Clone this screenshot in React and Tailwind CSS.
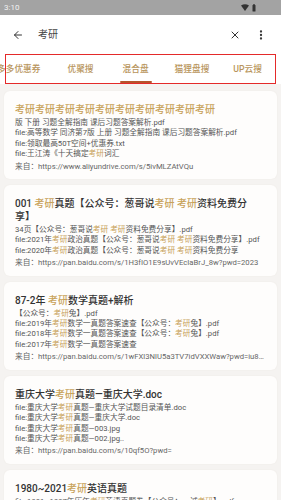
import { ArrowLeft, X, MoreVertical } from "lucide-react";

const FONT = { fontFamily: "Roboto, 'Noto Sans CJK SC', sans-serif" };

// 把“考研”高亮成金色
function Hl({ text }) {
  const parts = text.split("考研");
  return (
    <>
      {parts.map((p, i) => (
        <span key={i}>
          {p}
          {i < parts.length - 1 && <span className="text-[#c8a25a]">考研</span>}
        </span>
      ))}
    </>
  );
}

const results = [
  {
    title: ["考研考研考研考研考研考研考研考研考研考研"],
    files: [
      "版 下册 习题全解指南 课后习题答案解析.pdf",
      "file:高等数学 同济第7版 上册 习题全解指南 课后习题答案解析.pdf",
      "file:领取最高50T空间+优惠券.txt",
      "file:王江涛《十天搞定考研词汇",
    ],
    from: "https://www.aliyundrive.com/s/5ivMLZAtVQu",
  },
  {
    title: ["001 考研真题【公众号：葱哥说考研 考研资料免费分", "享】"],
    files: [
      "34页【公众号：葱哥说考研 考研资料免费分享】.pdf",
      "file:2021年考研政治真题【公众号：葱哥说考研 考研资料免费分享】.pdf",
      "file:2020年考研政治真题【公众号：葱哥说考研 考研资料免费分享",
    ],
    from: "https://pan.baidu.com/s/1H3fIO1E9sUvVEcIaBrJ_8w?pwd=2023",
  },
  {
    title: ["87-2年 考研数学真题+解析"],
    files: [
      "【公众号：考研兔】.pdf",
      "file:2019年考研数学一真题答案速查【公众号：考研兔】.pdf",
      "file:2018年考研数学一真题答案速查【公众号：考研兔】.pdf",
      "file:2017年考研数学一真题答案速查",
    ],
    from: "https://pan.baidu.com/s/1wFXl3NlU5a3TV7idVXXWaw?pwd=iu8kx2",
  },
  {
    title: ["重庆大学考研真题—重庆大学.doc"],
    files: [
      "file:重庆大学考研真题—重庆大学试题目录清单.doc",
      "file:重庆大学考研真题—重庆大学.doc",
      "file:重庆大学考研真题—003.jpg",
      "file:重庆大学考研真题—002.jpg..",
    ],
    from: "https://pan.baidu.com/s/10qf5O?pwd=",
  },
  {
    title: ["1980~2021考研英语真题"],
    files: ["file:1981~1997年历年考研英语真题卷【公众号：一诚考研】.pdf"],
    from: "https://pan.baidu.com/s/1aB",
  },
];

const tabs = [
  { name: "多多优惠券", ml: "ml-[-3px]" },
  { name: "优聚搜", ml: "ml-[27px]" },
  { name: "混合盘", ml: "ml-[29px]", active: true },
  { name: "猫狸盘搜", ml: "ml-[26px]" },
  { name: "UP云搜", ml: "ml-[24px]" },
];

function StatusBar() {
  return (
    <div className="h-[15px] bg-[#a3a3a3] flex items-center justify-between px-[4px]">
      <span className="text-[8px] text-[#f2f2f2] leading-none">3:10</span>
      <div className="flex items-center gap-[3px] mr-[21px]">
        <svg width="8" height="7" viewBox="0 0 8 7">
          <path d="M0 1.6 Q4 -1 8 1.6 L4 7 Z" fill="#333" />
        </svg>
        <svg width="4" height="8" viewBox="0 0 4 8">
          <rect x="0.5" y="1" width="3" height="6.5" rx="0.5" fill="#333" />
          <rect x="1.3" y="0" width="1.4" height="1.2" fill="#333" />
        </svg>
      </div>
    </div>
  );
}

function Toolbar() {
  return (
    <div className="h-[39px] bg-white flex items-center">
      <ArrowLeft size={12} strokeWidth={2} className="ml-[12px] text-[#333]" />
      <span className="ml-[14px] text-[10px] text-[#444]">考研</span>
      <div className="flex-1" />
      <X size={12} strokeWidth={2} className="text-[#333] mr-[14px]" />
      <MoreVertical size={12} strokeWidth={2.6} className="text-[#333] mr-[14px]" />
    </div>
  );
}

function Tabs() {
  return (
    <div className="relative h-[30px] bg-white overflow-hidden">
      <div className="flex h-full items-center pt-[2px] whitespace-nowrap">
        {tabs.map((t) => (
          <div key={t.name} className={`relative h-full flex items-center ${t.ml}`}>
            <span className="text-[8.7px] font-medium text-[#b8955c]">{t.name}</span>
            {t.active && (
              <span className="absolute bottom-[1px] left-[-3px] right-[-3px] h-[2px] rounded-full bg-[#b5542d]" />
            )}
          </div>
        ))}
      </div>
      <div className="absolute inset-y-0 left-[5px] right-[5px] border-[1.5px] border-[#e42a2a] pointer-events-none" />
    </div>
  );
}

function ResultCard({ item }) {
  return (
    <div className="bg-[#fefdfc] rounded-[6px] px-[11px] pt-[12px] pb-[7px] shadow-[0_0_2px_rgba(120,90,40,0.06)]">
      <div className="text-[10px] leading-[13px] font-medium text-[#333] mb-[2px]">
        {item.title.map((line, i) => (
          <div key={i} className="whitespace-nowrap">
            <Hl text={line} />
          </div>
        ))}
      </div>
      <div className="text-[7.7px] leading-[10.4px] text-[#555]">
        {item.files.map((f, i) => (
          <div key={i} className="truncate">
            <Hl text={f} />
          </div>
        ))}
      </div>
      <div className="mt-[2px] text-[7.7px] leading-[10.4px] text-[#666] truncate">
        来自：{item.from}
      </div>
    </div>
  );
}

export default function App() {
  return (
    <div className="w-[281px] h-[500px] overflow-hidden bg-[#f5f3f1]" style={FONT}>
      <StatusBar />
      <Toolbar />
      <Tabs />
      <div className="px-[4px] pt-[7px] flex flex-col gap-[6px]">
        {results.map((r, i) => (
          <ResultCard key={i} item={r} />
        ))}
      </div>
    </div>
  );
}
